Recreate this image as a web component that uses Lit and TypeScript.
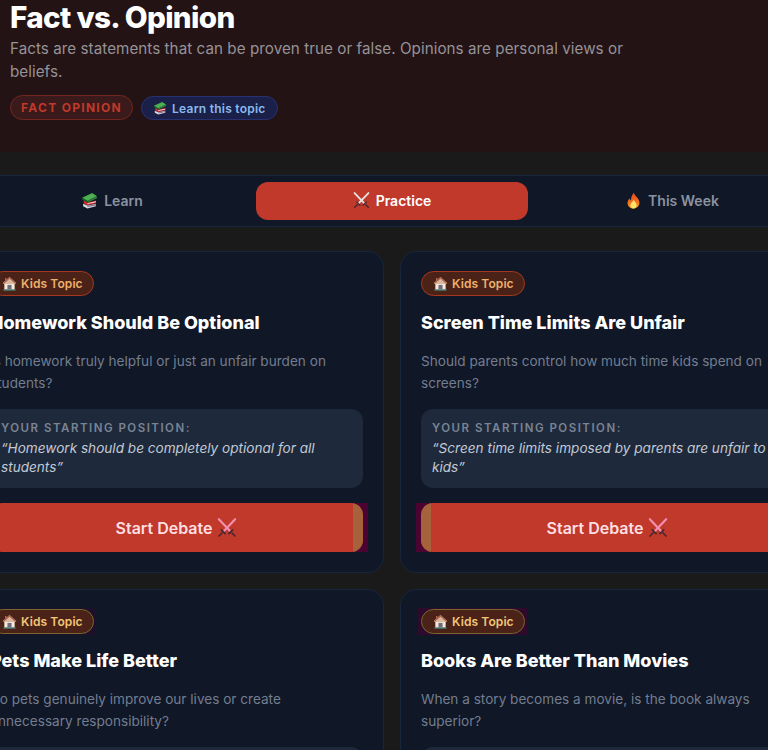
import { LitElement, html, css } from 'lit'
import { customElement } from 'lit/decorators.js'

const books = html`<svg class="ico" viewBox="0 0 16 16">
  <path d="M1 5.500 10.500 1 15 4 6 8.500Z" fill="#4caf50" />
  <path d="M6 8.500 15 4V5.800L6 10Z" fill="#2e7d32" />
  <path d="M1 5.500 6 8.500V10L1 7Z" fill="#1b5e20" />
  <path d="M2.500 8 6 10 14 8V10.500L6 12.500 2.500 10.500Z" fill="#d32f2f" />
  <path d="M6 10.600 14 8.800V9.600L6 11.400Z" fill="#f4e3e3" />
  <path d="M2 11 6 12.800 14 11V13.500L6 15.500 2 13.400Z" fill="#d5d8e0" />
  <path d="M6 13 14 11.400V12.600L6 14.200Z" fill="#8d6e8f" />
</svg>`

const swords = (blade: string) => html`<svg class="ico" viewBox="0 0 16 16" fill="none" stroke-linecap="round">
  <path d="M1.500 1 11 11" stroke="${blade}" stroke-width="1.700" />
  <path d="M14.500 1 5 11" stroke="${blade}" stroke-width="1.700" />
  <path d="M9.500 12.500 12.500 9.500M12 12 14.400 14.400" stroke="#4a2630" stroke-width="1.400" />
  <path d="M6.500 12.500 3.500 9.500M4 12 1.600 14.400" stroke="#4a2630" stroke-width="1.400" />
</svg>`

const fire = html`<svg class="ico" viewBox="1 0 14 16">
  <defs>
    <linearGradient id="fl" x1="0" y1="0" x2="0" y2="1">
      <stop offset="0" stop-color="#e8431f" />
      <stop offset="1" stop-color="#f7941d" />
    </linearGradient>
  </defs>
  <path d="M8.200.6C9 3.400 13.600 5.600 13.600 10.200 13.600 13.400 11.100 15.600 8 15.600S2.400 13.400 2.400 10.300C2.400 8.200 3.500 6.800 4.400 5.800 4.600 7 5 7.600 5.700 8 5.500 5.200 6.600 2.600 8.200.6Z" fill="url(#fl)" />
  <path d="M8.200 7.400C8.600 9 11 10.200 11 12.400 11 14.200 9.700 15.500 8 15.500S5 14.200 5 12.500C5 10.800 7.500 9.500 8.200 7.400Z" fill="#fde26b" />
</svg>`

const house = html`<svg class="ico" viewBox="0 0 16 16">
  <path d="M2.500 7H13.500V14.500H2.500Z" fill="#f5ead8" />
  <path d="M8 1 15.200 7.500 14 8.600H2L.8 7.500Z" fill="#d9b8a0" />
  <path d="M8 1 15.200 7.500 14 8.200 8 3 2 8.200.8 7.500Z" fill="#a8604c" />
  <path d="M3.200 2H4.800V4.200L3.200 5.600Z" fill="#b5604c" />
  <path d="M5.800 9.500H10.200V14.500H5.800Z" fill="#6f6a82" />
  <path d="M1.500 14.300H14.500V15.500H1.500Z" fill="#4f9a90" />
</svg>`

const topics = [
  {
    title: 'Homework Should Be Optional',
    desc: 'Is homework truly helpful or just an unfair burden on students?',
    position: 'Homework should be completely optional for all students',
  },
  {
    title: 'Screen Time Limits Are Unfair',
    desc: 'Should parents control how much time kids spend on screens?',
    position: 'Screen time limits imposed by parents are unfair to kids',
  },
  {
    title: 'Pets Make Life Better',
    desc: 'Do pets genuinely improve our lives or create unnecessary responsibility?',
    position: 'Having a pet makes everyone happier',
  },
  {
    title: 'Books Are Better Than Movies',
    desc: 'When a story becomes a movie, is the book always superior?',
    position: 'The book is always better than the movie',
  },
]

@customElement('app-root')
export class AppRoot extends LitElement {
  static styles = css`
    :host {
      display: block;
      width: 768px;
      height: 750px;
      overflow: hidden;
      background: #1a1a1a;
      font-family: Inter, 'Liberation Sans', sans-serif;
    }

    .page {
      width: 846px;
      margin-left: -31px;
      margin-top: -1px;
    }

    .header {
      height: 153px;
      box-sizing: border-box;
      padding-left: 41px;
      background: #231315;
    }

    h1 {
      margin: 0;
      font-size: 29.6px;
      line-height: 36px;
      font-weight: 800;
      letter-spacing: -0.65px;
      color: #fff;
    }

    .sub {
      width: 640px;
      margin: 3px 0 0;
      font-size: 15.2px;
      line-height: 22.5px;
      letter-spacing: 0.05px;
      color: #969296;
    }

    .chips {
      display: flex;
      align-items: center;
      gap: 8px;
      margin-top: 12px;
    }

    .chip {
      display: flex;
      align-items: center;
      box-sizing: border-box;
      border-radius: 13px;
      font-size: 12px;
    }

    .chip.fact {
      height: 25px;
      padding: 0 10px;
      background: #3a1a1a;
      border: 1px solid #74261f;
      font-weight: 700;
      letter-spacing: 1.3px;
      color: #c0392b;
    }

    .chip.learn {
      height: 24px;
      gap: 5px;
      margin-top: 1px;
      padding: 0 11px;
      background: #1a2048;
      border: 1px solid #283272;
      font-weight: 600;
      letter-spacing: 0.25px;
      color: #8ab8ee;
    }

    .chip.learn .ico {
      width: 14px;
      height: 14px;
    }

    .ico {
      width: 17px;
      height: 17px;
      flex: none;
    }

    .tabs {
      display: grid;
      grid-template-columns: repeat(3, 272px);
      gap: 8px;
      margin-top: 23px;
      padding: 6px;
      background: #101726;
      border: 1px solid #17263a;
    }

    .tab {
      display: flex;
      align-items: center;
      justify-content: center;
      gap: 6px;
      box-sizing: border-box;
      height: 38px;
      padding-bottom: 2px;
      border-radius: 12px;
      font-size: 14px;
      font-weight: 600;
      color: #8a92a2;
    }

    .tab.active {
      background: #c0392b;
      color: #fff;
    }

    .grid {
      display: grid;
      grid-template-columns: 415px 415px;
      gap: 16px;
      margin-top: 24px;
    }

    .card {
      box-sizing: border-box;
      height: 322px;
      padding: 19px 20px 20px;
      background: #101726;
      border: 1px solid #17263a;
      border-radius: 16px;
    }

    .badge-row {
      position: relative;
      z-index: 0;
      display: flex;
    }

    .badge {
      position: relative;
      display: flex;
      align-items: center;
      gap: 4px;
      box-sizing: border-box;
      height: 25px;
      padding: 0 10px 0 11px;
      background: #4a2218;
      border: 1.5px solid #a5381f;
      border-radius: 13px;
      font-size: 12px;
      font-weight: 600;
      letter-spacing: 0.1px;
      color: #efb06c;
    }

    .badge .ico {
      width: 15px;
      height: 15px;
    }

    .badge.halo {
      border-color: #74682c;
      color: #f3c678;
    }

    .badge.halo::before {
      content: '';
      position: absolute;
      z-index: -1;
      inset: -2px -3px -2px -4px;
      background: #2f0a2c;
    }

    .badge.faint::before {
      background: #1e0f2a;
    }

    h2 {
      margin: 13px 0 0;
      font-size: 18px;
      line-height: 27px;
      font-weight: 800;
      color: #fff;
    }

    .desc {
      margin: 14px 0 0;
      font-size: 13.6px;
      line-height: 22px;
      color: #737d90;
    }

    .position {
      box-sizing: border-box;
      height: 79px;
      margin-top: 15px;
      padding: 12px 11px 11px;
      background: #1e293b;
      border-radius: 12px;
    }

    .label {
      font-size: 11.5px;
      line-height: 15px;
      font-weight: 600;
      letter-spacing: 1.5px;
      color: #7a8494;
    }

    .quote {
      margin-top: 3px;
      font-size: 13.6px;
      line-height: 19px;
      font-style: italic;
      color: #c3cad5;
    }

    .cta {
      position: relative;
      margin-top: 15px;
    }

    .cta.edge-left::before,
    .cta.edge-right::before {
      content: '';
      position: absolute;
      top: 0;
      bottom: 0;
      width: 24px;
      background: #4b0432;
    }

    .cta.edge-left::before {
      left: -5px;
    }

    .cta.edge-right::before {
      right: -5px;
    }

    .btn {
      position: relative;
      display: flex;
      align-items: center;
      justify-content: center;
      gap: 5px;
      height: 49px;
      overflow: hidden;
      background: #c0392b;
      border-radius: 12px;
      font-size: 16px;
      font-weight: 600;
      color: #ffdfe2;
    }

    .btn .ico {
      width: 20px;
      height: 20px;
    }

    .cta.edge-left .btn::before,
    .cta.edge-right .btn::before {
      content: '';
      position: absolute;
      top: 0;
      bottom: 0;
      width: 10px;
      background: #a6623a;
    }

    .cta.edge-left .btn::before {
      left: 0;
    }

    .cta.edge-right .btn::before {
      right: 0;
    }
  `

  renderCard(t: (typeof topics)[number], i: number) {
    const badge = i === 2 ? 'halo faint' : i === 3 ? 'halo' : ''
    return html`<div class="card">
      <div class="badge-row">
        <div class="badge ${badge}">${house}Kids Topic</div>
      </div>
      <h2>${t.title}</h2>
      <p class="desc">${t.desc}</p>
      <div class="position">
        <div class="label">YOUR STARTING POSITION:</div>
        <div class="quote">“${t.position}”</div>
      </div>
      <div class="cta ${i === 0 ? 'edge-right' : i === 1 ? 'edge-left' : ''}">
        <div class="btn">Start Debate ${swords('#f48fb1')}</div>
      </div>
    </div>`
  }

  render() {
    return html`<div class="page">
      <div class="header">
        <h1>Fact vs. Opinion</h1>
        <p class="sub">Facts are statements that can be proven true or false. Opinions are personal views or beliefs.</p>
        <div class="chips">
          <span class="chip fact">FACT OPINION</span>
          <span class="chip learn">${books}Learn this topic</span>
        </div>
      </div>
      <div class="tabs">
        <div class="tab">${books}Learn</div>
        <div class="tab active">${swords('#e8e4e0')}Practice</div>
        <div class="tab">${fire}This Week</div>
      </div>
      <div class="grid">${topics.map((t, i) => this.renderCard(t, i))}</div>
    </div>`
  }
}
